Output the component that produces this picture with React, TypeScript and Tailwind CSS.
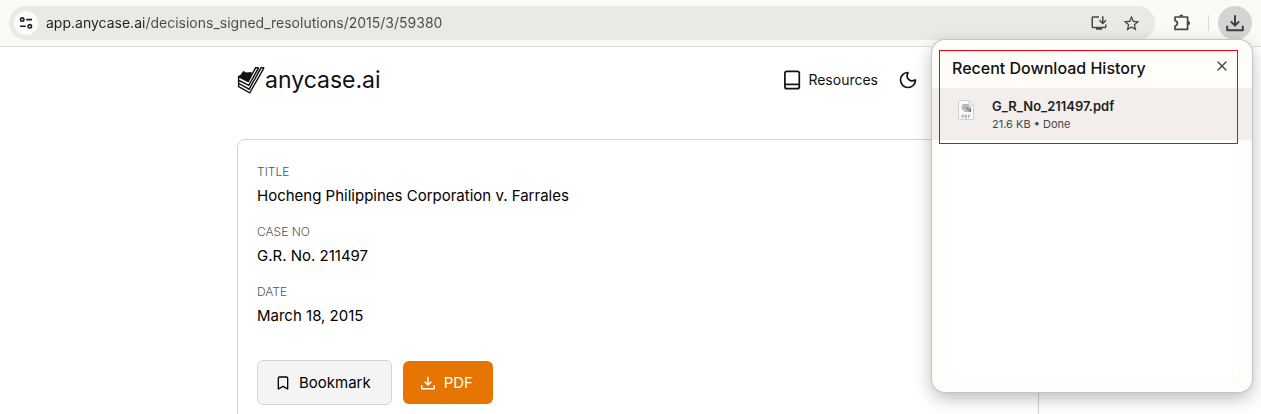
import React, { ReactNode } from "react";
import { Bookmark, Moon, X } from "lucide-react";
import { MdOutlineInstallDesktop, MdStarOutline } from "react-icons/md";

function TuneIcon() {
  return (
    <svg viewBox="0 0 16 16" className="size-4" fill="none" stroke="#1f1f1f" strokeWidth="1.6" aria-hidden="true">
      <circle cx="4.2" cy="4.6" r="1.7" />
      <path d="M8.2 4.6h5.8M2 11.3h5.8" />
      <circle cx="11.8" cy="11.3" r="1.7" />
    </svg>
  );
}

function PuzzleIcon() {
  return (
    <svg viewBox="0 0 20 20" className="size-5" fill="none" stroke="#474747" strokeWidth="1.7" strokeLinejoin="round" aria-hidden="true">
      <path d="M3 4H15.6V16.4H3V13C6.2 12.4 6.2 8.2 3 7.6Z" />
      <path d="M7.2 3.6a2.1 2.1 0 0 1 4.2 0zM16 8.1a2.1 2.1 0 0 1 0 4.2z" fill="#474747" stroke="none" />
    </svg>
  );
}

function TrayIcon({ className, width }: { className: string; width: number }) {
  return (
    <svg viewBox="0 0 20 20" className={className} fill="none" stroke="currentColor" strokeWidth={width} strokeLinejoin="round" aria-hidden="true">
      <path d="M10 2.2v10.2M5.8 8.4 10 12.6l4.2-4.2M2.2 12.8v4.4h15.6v-4.4" />
    </svg>
  );
}

function BookIcon() {
  return (
    <svg viewBox="0 0 20 20" className="size-5" fill="none" stroke="#111" strokeWidth="1.7" strokeLinejoin="round" aria-hidden="true">
      <rect x="2.9" y="1.3" width="14.4" height="17.4" rx="2" />
      <path d="M2.9 14.4H17.3" />
    </svg>
  );
}

function LogoMark() {
  return (
    <svg viewBox="0 0 28 28" className="size-7" fill="none" stroke="#111" aria-hidden="true">
      <path d="M1 10.2 3.6 8.8 6.2 5 9.2 6.6 14.4 6 15 8.6 11.2 15.4Z" fill="#111" stroke="none" />
      <path
        d="M1 10.4 11.2 15.6 18.6 1.8H21.6M1.6 10.4V14.2L11.8 19.4 21.6 1.8M1.6 14.2V17.4L12.2 23.2 24 1.8H27.2M1.6 17.4V20.6L12.8 26.8 27 1.8"
        strokeWidth="1.4"
      />
    </svg>
  );
}

function PdfFileIcon() {
  return (
    <svg viewBox="0 0 16 20" className="h-5 w-4" fill="none" aria-hidden="true">
      <path d="M.5.5h10.3L15.5 5v14.5H.5Z" fill="#fafafa" stroke="#d2d0cf" />
      <path d="M10.8.5V5h4.7" stroke="#d2d0cf" />
      <path d="M4.5 5h6M3.5 7h9M4 9h8M6 11h6.5" stroke="#777" strokeWidth="1.2" />
      <path d="M8.4 7.4l4.2 4.6M12.4 8v4" stroke="#666" />
      <path d="M4 18v-3h1.4v1.5H4M7 15v3h1.5v-3zM10.5 18v-3h2M10.5 16.5h1.5" stroke="#999" strokeWidth=".7" />
    </svg>
  );
}

function Field({ label, children }: { label: string; children: ReactNode }) {
  return (
    <div>
      <dt className="text-xs leading-4 font-light text-[#555]">{label}</dt>
      <dd className="mt-1 text-[15px] leading-6 text-black">{children}</dd>
    </div>
  );
}

function BrowserToolbar() {
  return (
    <header className="flex items-center border-b border-[#dfdfdc] bg-[#fbfaf6] py-1.5 pr-[9px] pl-[9px]">
      <div className="flex h-[34px] min-w-0 flex-1 items-center rounded-full bg-[#e9eae5] pr-3.5 pl-[5px]">
        <button type="button" aria-label="Site information" className="flex size-6 items-center justify-center rounded-full bg-[#fbfbf9]">
          <TuneIcon />
        </button>
        <input
          type="text"
          aria-label="Address"
          defaultValue="app.anycase.ai/decisions_signed_resolutions/2015/3/59380"
          className="ml-2 min-w-0 flex-1 bg-[linear-gradient(90deg,#1f1f1f_98px,#4a4a4a_98px)] bg-clip-text text-sm leading-5 text-transparent outline-none"
        />
        <button type="button" aria-label="Install app" className="text-[#474747]">
          <MdOutlineInstallDesktop className="size-[18px]" />
        </button>
        <button type="button" aria-label="Bookmark this tab" className="ml-3.5 text-[#474747]">
          <MdStarOutline className="size-[19px]" />
        </button>
      </div>
      <button type="button" aria-label="Extensions" className="ml-[17px]">
        <PuzzleIcon />
      </button>
      <span className="ml-4 h-4 w-px bg-[#dadad8]" />
      <button type="button" aria-label="Downloads" className="ml-[9px] flex size-[34px] items-center justify-center rounded-full bg-[#d5d4d2] text-[#3f3f3f]">
        <TrayIcon className="size-5" width={2} />
      </button>
    </header>
  );
}

function DownloadsPopover() {
  return (
    <section
      aria-label="Recent Download History"
      className="absolute top-10 right-[9px] h-[352px] w-80 rounded-[13px] bg-[#fefdf9] shadow-[0_0_0_1px_#c4c4c1,0_6px_18px_rgba(0,0,0,0.28)]"
    >
      <div className="flex h-12 items-start justify-between pt-4 pr-[22px] pl-5">
        <h2 className="text-base leading-6 font-medium text-[#111]">Recent Download History</h2>
        <button type="button" aria-label="Close" className="pt-0.5 text-[#474747]">
          <X className="size-4" strokeWidth={2} />
        </button>
      </div>
      <div className="flex h-[52px] items-start bg-[#f2eeec] pt-2 pl-[26px]">
        <div className="pt-1">
          <PdfFileIcon />
        </div>
        <div className="ml-[18px]">
          <p className="text-[13px] leading-5 font-semibold text-[#1f1f1f]">G_R_No_211497.pdf</p>
          <p className="text-[11px] leading-4 text-[#474747]">21.6 KB • Done</p>
        </div>
      </div>
      <div className="mx-[13px] h-[238px] bg-white" />
      <div className="pointer-events-none absolute top-2.5 right-3.5 left-[7px] h-[94px] border border-[#f00010]" />
    </section>
  );
}

export default function App() {
  return (
    <div className="relative h-screen overflow-hidden bg-white font-['Inter','Liberation_Sans',sans-serif]">
      <BrowserToolbar />
      <div className="pl-[15px]">
        <div className="mx-auto max-w-[802px]">
          <div className="flex h-[66px] items-center justify-between pr-[121px]">
            <a href="#home" className="flex items-center text-[23px] leading-8 text-[#111]">
              <LogoMark />
              anycase.ai
            </a>
            <nav className="flex items-center gap-5">
              <a href="#resources" className="flex items-center gap-1.5 text-sm leading-5 text-[#111]">
                <BookIcon />
                Resources
              </a>
              <button type="button" aria-label="Toggle dark mode" className="text-[#111]">
                <Moon className="size-5" strokeWidth={2} />
              </button>
            </nav>
          </div>
          <main className="mt-[26px] rounded-lg border border-[#d4d4d4] px-[19px] pt-6 pb-10">
            <dl className="flex flex-col gap-4">
              <Field label="TITLE">Hocheng Philippines Corporation v. Farrales</Field>
              <Field label="CASE NO">G.R. No. 211497</Field>
              <Field label="DATE">March 18, 2015</Field>
            </dl>
            <div className="mt-8 flex items-center gap-[11px]">
              <button type="button" className="flex h-[45px] items-center gap-2 rounded-md border border-[#d4d4d4] bg-[#f4f4f4] pr-5 pl-[17px] text-[15px] leading-6 text-black">
                <Bookmark className="size-4" strokeWidth={2} />
                Bookmark
              </button>
              <button type="button" className="flex h-[43px] items-center gap-2 rounded-md bg-[#e67500] pr-5 pl-[17px] text-[15px] leading-6 text-white">
                <TrayIcon className="size-4" width={1.8} />
                PDF
              </button>
            </div>
          </main>
        </div>
      </div>
      <DownloadsPopover />
    </div>
  );
}
